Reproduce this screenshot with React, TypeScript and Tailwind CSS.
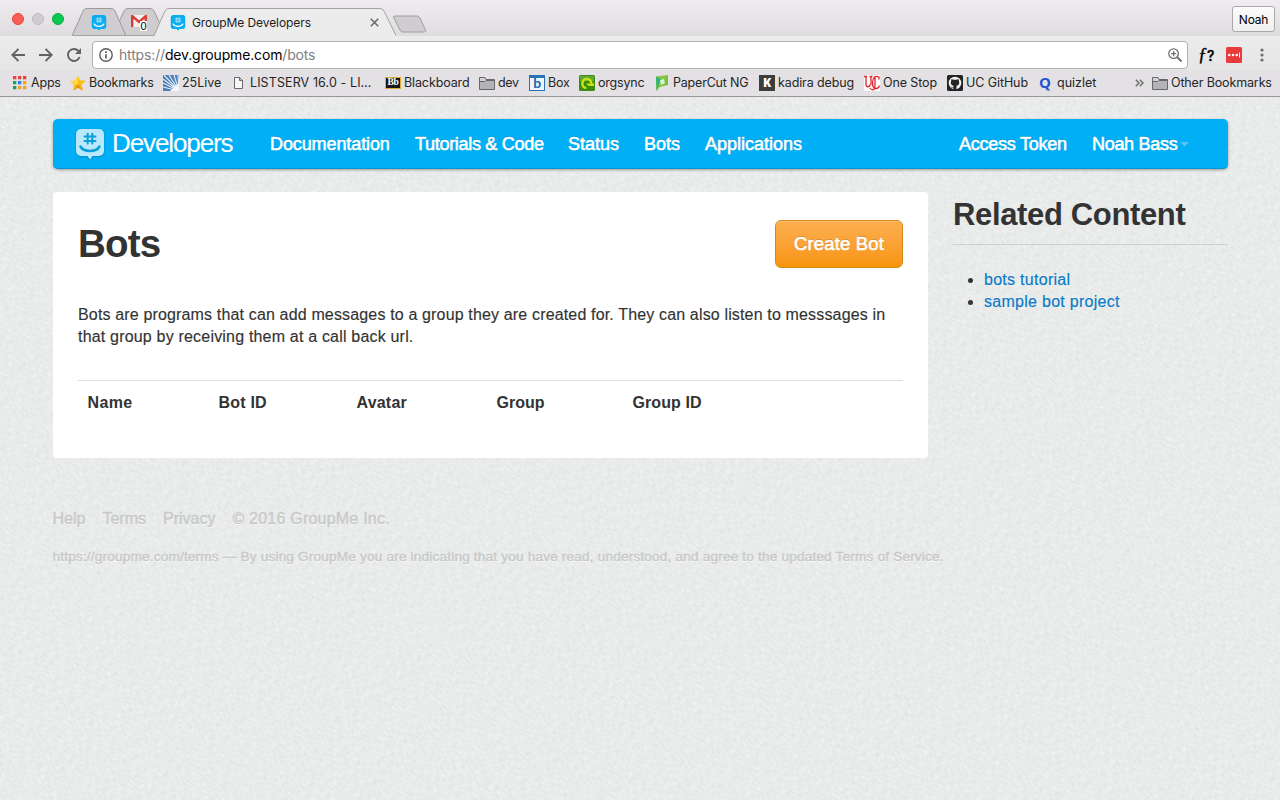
import React from "react";

function GroupMeIcon({ className, body, face, hash }: { className: string; body: string; face: string; hash: string }) {
  return (
    <svg viewBox="0 0 28 31" className={className} fill="none">
      <path d="M5 0h18a5 5 0 0 1 5 5v17a5 5 0 0 1-5 5h-6.500l-2.500 3.500L11.500 27H5a5 5 0 0 1-5-5V5a5 5 0 0 1 5-5z" fill={body} />
      <path d="M11.700 4.800v9.800M16.300 4.800v9.800M8.500 7.600h11M8.500 12h11" stroke={hash} strokeWidth="2" strokeLinecap="round" />
      <path d="M4.500 17.500c3.500 6 15.500 6 19 0" stroke={face} strokeWidth="2.600" strokeLinecap="round" />
    </svg>
  );
}

function Folder() {
  return (
    <svg viewBox="0 0 16 14" className="h-[14px] w-[16px] shrink-0">
      <path d="M.5 13.500v-12h5.500l1 2h8.500v10z" fill="#d4d2d4" stroke="#67676a" />
      <path d="M1 6h5l1-1h8v8H1z" fill="#b4b3b5" />
      <path d="M.5 5.500h5.500l1-1h8.500" fill="none" stroke="#67676a" />
    </svg>
  );
}

const icons: Record<string, React.ReactNode> = {
  apps: (
    <svg viewBox="0 0 14 14" className="h-[14px] w-[14px]">
      {["#ee3f3d", "#ee3f3d", "#ee3f3d", "#19a15f", "#2f7de1", "#f4a022", "#19a15f", "#f4a022", "#f4a022"].map((c, i) => (
        <rect key={i} x={(i % 3) * 5} y={Math.floor(i / 3) * 5} width="3.300" height="3.300" fill={c} />
      ))}
    </svg>
  ),
  star: (
    <svg viewBox="0 0 16 16" className="h-[16px] w-[16px]">
      <path d="M7.800.4l2.300 4.800 5.600.5-4 4 1.300 5.800-5-2.800L3 15.600l1-5.700L.2 6.200l5.200-.8z" fill="#fbbf16" />
      <path d="M7.800.4l.3 8.600-4.100.9L.2 6.200l5.200-.8z" fill="#ffd748" />
      <path d="M3 15.600L8 9l5 6.500-5-2.800z" fill="#e99512" />
    </svg>
  ),
  live: (
    <svg viewBox="0 0 16 16" className="h-[16px] w-[16px]">
      <path d="M0 0h16v16H0z" fill="#4c7fb8" />
      <path d="M16 16L1 0M16 16L6 0M16 16L11 0M16 16L0 4M16 16L0 8M16 16L0 12M16 16L15 0" stroke="#e8f1fa" strokeWidth="1.100" />
      <path d="M7 16h9V8z" fill="#f3f7fb" />
    </svg>
  ),
  page: (
    <svg viewBox="0 0 9 12" className="h-[12px] w-[9px]">
      <path d="M.5.500h5l3 3v8h-8zM5.500.500v3h3" fill="#f7f7f7" stroke="#68686b" />
    </svg>
  ),
  bb: (
    <span className="flex h-[12px] w-[16px] items-center justify-center border border-[#dca93b] bg-[#181818] font-['Liberation_Serif',serif] text-[9.5px] leading-none font-bold tracking-[-0.4px] text-white">Bb</span>
  ),
  folder: <Folder />,
  box: (
    <span className="flex h-[16px] w-[16px] items-center justify-center border border-t-3 border-[#2873b8] bg-[#eef5fc] pb-[2px] font-['Lato',sans-serif] text-[14px] leading-none font-bold text-[#1b66b0]">b</span>
  ),
  org: (
    <svg viewBox="0 0 16 16" className="h-[16px] w-[16px]">
      <rect width="16" height="16" rx="1.500" fill="#3c8a12" />
      <path d="M1 1h14v5H1z" fill="#63a836" />
      <path d="M12.300 8.800a4.500 4.500 0 1 0-5 4.200" fill="none" stroke="#c6e314" strokeWidth="2.600" />
      <path d="M7 8.500h8v2.500h-5.500z" fill="#c6e314" />
    </svg>
  ),
  paper: (
    <svg viewBox="0 0 12 16" className="h-[16px] w-[12px]">
      <path d="M0 1.500L12 0v10l-8 2-3.500 4z" fill="#8bc53f" />
      <path d="M0 1.500l5 2.500-2 5-2.500 7z" fill="#31b478" />
      <path d="M12 0L8 5v5l4 0z" fill="#76c043" />
      <path d="M4 5l4-1 1 4-4 2z" fill="#d9f3dd" />
    </svg>
  ),
  kadira: (
    <span className="flex h-[16px] w-[16px] items-center justify-center bg-[#3d3d3d] font-['Open_Sans',sans-serif] text-[12px] leading-none font-extrabold text-white">K</span>
  ),
  uc: (
    <svg viewBox="0 0 16 16" className="h-[16px] w-[16px]">
      <path d="M0 0h16v16H0z" fill="#fff" />
      <path d="M0 1.500h3M2 1.500v8c0 3 3.500 3 4.500 0M5.500 1.500h3M7 1.500v8M15 4.500V2c-4-2-6.500 1-6.500 6s3 7.500 6.500 4v-1.500M6 13c2 3 5 2 5-1V2" fill="none" stroke="#df2430" strokeWidth="1.300" />
    </svg>
  ),
  github: (
    <svg viewBox="0 0 16 16" className="h-[16px] w-[16px]">
      <rect width="16" height="16" rx="1.500" fill="#222426" />
      <circle cx="8" cy="8" r="6.300" fill="#f4f4f4" />
      <path d="M4.500 4l2 .8h3l2-.8.4 2c1 2.500 0 4.300-2.400 4.700v4h-3v-1.500c-1.700.3-2-.8-2.700-1.500 1.200 0 1.200 1 2.500.7l.2-1.700C4.200 10.300 3.200 8.500 4.100 6z" fill="#222426" />
    </svg>
  ),
  quizlet: <span className="w-[14px] pb-[2px] font-['Open_Sans',sans-serif] text-[15px] leading-[15px] font-bold text-[#2453d2]">Q</span>,
};

const bookmarks = [
  { icon: "apps", label: "Apps", box: "w-[57px] gap-[4px] tracking-[-0.2px]" },
  { icon: "star", label: "Bookmarks", box: "w-[93px] gap-[3px] tracking-[-0.2px]" },
  { icon: "live", label: "25Live", box: "w-[71px] gap-[3px]" },
  { icon: "page", label: "LISTSERV 16.0 - LI…", box: "w-[151px] gap-[7px] tracking-[0.1px]" },
  { icon: "bb", label: "Blackboard", box: "w-[94px] gap-[3px] tracking-[-0.12px]" },
  { icon: "folder", label: "dev", box: "w-[50px] gap-[3px] tracking-[-0.3px]" },
  { icon: "box", label: "Box", box: "w-[50px] gap-[3px] tracking-[-0.2px]" },
  { icon: "org", label: "orgsync", box: "w-[77px] gap-[3px] tracking-[-0.2px]" },
  { icon: "paper", label: "PaperCut NG", box: "w-[103px] gap-[5px] tracking-[-0.2px]" },
  { icon: "kadira", label: "kadira debug", box: "w-[105px] gap-[3px] tracking-[-0.12px]" },
  { icon: "uc", label: "One Stop", box: "w-[83px] gap-[3px] tracking-[-0.12px]" },
  { icon: "github", label: "UC GitHub", box: "w-[92px] gap-[3px] tracking-[-0.08px]" },
  { icon: "quizlet", label: "quizlet", box: "w-[96px] gap-[4px]" },
];

function TabStrip() {
  return (
    <div className="flex h-[36px] items-start bg-gradient-to-b from-[#efedef] to-[#dedcde]">
      <div className="flex w-[72px] gap-[8px] pt-[13px] pl-[12px]">
        <span className="h-[12px] w-[12px] rounded-full border border-[#e2463f] bg-[#fc5b57]" />
        <span className="h-[12px] w-[12px] rounded-full border border-[#bcbabc] bg-[#cfcdcf]" />
        <span className="h-[12px] w-[12px] rounded-full border border-[#12ac44] bg-[#06c852]" />
      </div>
      <div className="relative h-[36px] w-[47px] pt-[15px] pl-[19px]">
        <svg viewBox="0 0 324 36" className="absolute top-0 left-0 h-[36px] w-[324px]">
          <path d="M47 22L52 11Q53 8.500 56 8.500H78Q81 8.500 82 11L88 24 82 36H54z" fill="#cfcdcf" stroke="#9c9a9c" />
          <path d="M0 36L11 11Q12 8.500 15 8.500H39Q42 8.500 43 11L54 36z" fill="#cfcdcf" stroke="#9c9a9c" />
          <path d="M82 36.500L93 11Q94 8.500 97 8.500H308Q311 8.500 312 11L324 36.500z" fill="#ececec" />
          <path d="M0 35.500H82L93 11Q94 8.500 97 8.500H308Q311 8.500 312 11L324 35.500" fill="none" stroke="#a5a3a5" />
        </svg>
        <GroupMeIcon className="relative h-[16px] w-[16px]" body="#08aef0" face="#fff" hash="#9edcf8" />
      </div>
      <div className="relative h-[36px] w-[34px] pt-[15px] pl-[12px]">
        <svg viewBox="0 0 16 12" className="h-[12px] w-[16px]">
          <path d="M0 0h16v12H0z" fill="#f6f1f0" />
          <path d="M1.200 12V1L8 7l6.800-6v11" fill="none" stroke="#da3c34" strokeWidth="2.400" />
        </svg>
        <span className="absolute top-[21px] left-[21px] h-[10px] w-[7px] bg-white text-center font-['Liberation_Sans',sans-serif] text-[11px] leading-[11px] text-black">0</span>
      </div>
      <div className="relative flex h-[36px] w-[240px] items-center pt-[9px] pl-[17px] text-[12px] text-[#1e1e1e]">
        <GroupMeIcon className="h-[16px] w-[16px]" body="#08aef0" face="#fff" hash="#9edcf8" />
        <span className="w-[184px] shrink-0 pl-[6px] tracking-[-0.08px] whitespace-nowrap">GroupMe Developers</span>
        <svg viewBox="0 0 9 9" className="h-[9px] w-[9px] shrink-0"><path d="M.8.800l7.400 7.400m0-7.400l-7.400 7.400" stroke="#6b6b6b" strokeWidth="1.600" /></svg>
      </div>
      <svg viewBox="0 0 34 18" className="mt-[15px] h-[18px] w-[34px]">
        <path d="M2 1H24Q26 1 27 3L32.500 15Q33 17 31 17H10Q8 17 7 15L.8 3Q0 1 2 1z" fill="#cfcdcf" stroke="#a09ea0" />
      </svg>
      <div className="flex-1" />
      <div className="mt-[6px] mr-[5px] flex h-[26px] w-[43px] items-center justify-center rounded-[3px] border border-[#aaa8aa] bg-gradient-to-b from-[#fbfbfb] to-[#f0f0f0] pt-px text-[12px] tracking-[-0.2px] text-black">Noah</div>
    </div>
  );
}

function Toolbar() {
  return (
    <div className="flex h-[34px] items-center bg-gradient-to-b from-[#ececec] to-[#e7e5e7] pt-[4px]">
      <div className="flex w-[92px] items-center gap-[14px] pl-[11px]">
        <svg viewBox="0 0 14 14" className="h-[14px] w-[14px]" fill="none" stroke="#626262" strokeWidth="1.900"><path d="M14 7H1.500M7.500.8L1.300 7l6.200 6.200" /></svg>
        <svg viewBox="0 0 14 14" className="h-[14px] w-[14px]" fill="none" stroke="#626262" strokeWidth="1.900"><path d="M0 7h12.500M6.500.8L12.700 7l-6.200 6.200" /></svg>
        <svg viewBox="0 0 14 14" className="h-[14px] w-[14px]" fill="none"><path d="M12.600 9A6 6 0 1 1 11.300 2.800L12.700 4.200" stroke="#626262" strokeWidth="1.900" /><path d="M14 0v6H8z" fill="#626262" /></svg>
      </div>
      <div className="flex h-[28px] w-[1096px] items-center rounded-[4px] border border-[#b1afb1] bg-white pl-[6px]">
        <svg viewBox="0 0 14 14" className="h-[14px] w-[14px]" fill="none" stroke="#5b5b5b"><circle cx="7" cy="7" r="6.200" strokeWidth="1.400" /><path d="M7 6.200v4.300M7 3.300v1.600" strokeWidth="1.700" /></svg>
        <span className="w-[1055px] pb-px pl-[6px] text-[14px] tracking-[-0.16px] text-[#808080]">https://<span className="text-black">dev.groupme.com</span>/bots</span>
        <svg viewBox="0 0 14 14" className="h-[14px] w-[14px]" fill="none" stroke="#717171" strokeWidth="1.300"><circle cx="5.600" cy="5.600" r="4.800" /><path d="M9 9l4.500 4.500" strokeWidth="2" /><path d="M5.600 3v5.200M3 5.600h5.200" /></svg>
      </div>
      <span className="flex w-[38px] items-baseline pl-[10px] font-['Liberation_Serif',serif] text-[18px] leading-[18px] text-black italic [-webkit-text-stroke:0.4px_black]">ƒ<span className="font-['Inter',sans-serif] text-[14px] font-medium not-italic">?</span></span>
      <svg viewBox="0 0 16 16" className="h-[16px] w-[16px]">
        <rect width="16" height="16" rx="1.500" fill="#e73b3c" />
        <circle cx="3.200" cy="8" r="1.300" fill="#fff" /><circle cx="7" cy="8" r="1.300" fill="#fff" /><circle cx="10.800" cy="8" r="1.300" fill="#fff" />
        <path d="M13.500 5.500v5" stroke="#fff" />
      </svg>
      <svg viewBox="0 0 4 14" className="ml-[18px] h-[14px] w-[4px]" fill="#6d6d6d"><circle cx="2" cy="2" r="1.600" /><circle cx="2" cy="7" r="1.600" /><circle cx="2" cy="12" r="1.600" /></svg>
    </div>
  );
}

function BookmarksBar() {
  return (
    <div className="flex h-[27px] items-center border-b border-[#98969a] bg-[#e3e1e4] pl-[13px] text-[12.5px] text-[#262626]">
      {bookmarks.map((b) => (
        <div key={b.label} className={"flex shrink-0 items-center whitespace-nowrap " + b.box}>
          {icons[b.icon]}
          <span>{b.label}</span>
        </div>
      ))}
      <svg viewBox="0 0 9 8" className="h-[8px] w-[9px]" fill="none" stroke="#707070" strokeWidth="1.500"><path d="M.8.800L4 4 .8 7.200M4.800.800L8 4 4.800 7.200" /></svg>
      <div className="ml-[8px] flex items-center gap-[3px] tracking-[-0.14px] whitespace-nowrap"><Folder /><span>Other Bookmarks</span></div>
    </div>
  );
}

function Texture() {
  return (
    <svg className="absolute inset-0 h-full w-full" aria-hidden="true">
      <filter id="grain" x="0" y="0" width="100%" height="100%" colorInterpolationFilters="sRGB">
        <feTurbulence type="fractalNoise" baseFrequency="0.2 0.5" numOctaves="2" seed="4" />
        <feColorMatrix values="0.09 0 0 0 0.870  0.09 0 0 0 0.878  0.09 0 0 0 0.874  0 0 0 0 1" />
      </filter>
      <g transform="rotate(42 640 350)">
        <rect x="-200" y="-400" width="1700" height="1500" filter="url(#grain)" />
      </g>
    </svg>
  );
}

function Navbar() {
  return (
    <nav className="flex h-[50px] items-center rounded-[5px] border-b border-[#0a94d2] bg-[#00aff5] pl-[23px] text-[18px] whitespace-nowrap text-white shadow-[0_1px_3px_rgba(0,0,0,0.35)] [-webkit-text-stroke:0.55px_white] [text-shadow:0_-1px_0_rgba(0,0,0,0.2)]">
      <GroupMeIcon className="mt-[2px] h-[31px] w-[28px] drop-shadow-[0_1px_1px_rgba(0,0,0,0.2)]" body="#b9e7fb" face="#079fd9" hash="#079fd9" />
      <span className="w-[166px] pb-[2px] pl-[8px] text-[26px] tracking-[-1.1px] [-webkit-text-stroke:0.1px_white] [text-shadow:none]">Developers</span>
      <a className="w-[145px] tracking-[-0.1px]">Documentation</a>
      <a className="w-[153px] tracking-[-0.3px]">Tutorials &amp; Code</a>
      <a className="w-[76px]">Status</a>
      <a className="w-[61px]">Bots</a>
      <a className="w-[254px]">Applications</a>
      <a className="w-[133px] tracking-[-0.25px]">Access Token</a>
      <a className="flex items-center gap-[3px] tracking-[-0.3px]">Noah Bass<svg viewBox="0 0 9 5" className="mt-[2px] h-[5px] w-[9px]"><path d="M0 0h9L4.500 4.500z" fill="#53c6f6" /></svg></a>
    </nav>
  );
}

export default function App() {
  return (
    <div className="flex h-[800px] w-[1280px] flex-col overflow-hidden font-['Inter',sans-serif]">
      <TabStrip />
      <Toolbar />
      <BookmarksBar />
      <div className="relative flex-1 overflow-hidden bg-[#e9ebea]">
        <Texture />
        <div className="relative px-[52px] pt-[22px] pl-[53px] font-['Liberation_Sans',sans-serif] text-[16px] leading-[22px] text-[#333]">
          <Navbar />
          <div className="mt-[23px] flex gap-[25px]">
            <main className="h-[266px] w-[875px] rounded-[4px] bg-white px-[25px] pt-[28px]">
              <div className="flex justify-between">
                <h1 className="pt-[2px] text-[38.5px] leading-[43px] font-bold tracking-[-0.8px]">Bots</h1>
                <button className="h-[48px] w-[128px] rounded-[6px] border border-[#d58818] bg-gradient-to-b from-[#fcb04e] to-[#f89406] text-[18.500px] tracking-[0.15px] text-white shadow-[inset_0_1px_0_rgba(255,255,255,0.2)] [-webkit-text-stroke:0.55px_white] [text-shadow:0_-1px_0_rgba(0,0,0,0.25)]">Create Bot</button>
              </div>
              <p className="mt-[36px] tracking-[0.155px] whitespace-nowrap [-webkit-text-stroke:0.15px_#333]">Bots are programs that can add messages to a group they are created for. They can also listen to messsages in<br /><span className="tracking-[0.19px]">that group by receiving them at a call back url.</span></p>
              <div className="mt-[32px] flex border-t border-[#ddd] pt-[11px] pl-[9.5px] font-bold">
                <span className="w-[131px] tracking-[0.35px]">Name</span>
                <span className="w-[138px] tracking-[0.2px]">Bot ID</span>
                <span className="w-[140px] tracking-[0.2px]">Avatar</span>
                <span className="w-[136px]">Group</span>
                <span className="tracking-[0.1px]">Group ID</span>
              </div>
            </main>
            <aside className="w-[275px]">
              <h2 className="h-[53px] border-b border-[#cfd0d0] pt-[2px] text-[31px] leading-[42px] font-bold tracking-[-0.35px] whitespace-nowrap">Related Content</h2>
              <ul className="mt-[24px] list-disc pl-[31px] tracking-[0.28px] text-[#0b7ac9] [-webkit-text-stroke:0.15px_#0b7ac9] marker:text-[#333]">
                <li>bots tutorial</li>
                <li>sample bot project</li>
              </ul>
            </aside>
          </div>
          <footer className="-ml-[0.5px] mt-[50px] text-[#c8c9c9] [-webkit-text-stroke:0.45px_#c8c9c9] [text-shadow:0_1px_0_#fff]">
            <div className="flex gap-[17px]">
              <span>Help</span><span>Terms</span><span>Privacy</span><span className="tracking-[0.22px]">© 2016 GroupMe Inc.</span>
            </div>
            <p className="mt-[16px] text-[13.6px] tracking-[0.185px] whitespace-nowrap">https://groupme.com/terms — By using GroupMe you are indicating that you have read, understood, and agree to the updated Terms of Service.</p>
          </footer>
        </div>
      </div>
    </div>
  );
}
